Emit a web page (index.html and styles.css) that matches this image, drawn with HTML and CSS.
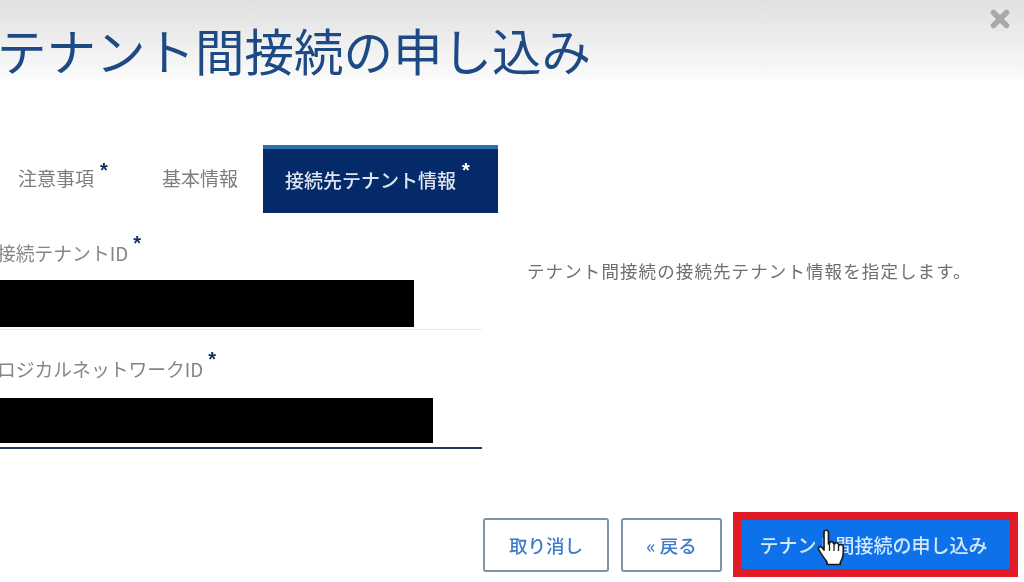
FILE: index.html
```html
<!DOCTYPE html>
<html lang="ja">
<head>
<meta charset="utf-8">
<title>テナント間接続の申し込み</title>
<link rel="stylesheet" href="styles.css">
</head>
<body>
<div class="dialog">
  <header class="head">
    <h1 class="title">テナント間接続の申し込み</h1>
    <span class="close">
      <svg width="22" height="22" viewBox="0 0 22 22"><path d="M4.500 4.500L17.500 17.500M17.500 4.500L4.500 17.500" stroke="#a9a9a9" stroke-width="5.500" stroke-linecap="round"/></svg>
    </span>
  </header>
  <nav class="tabs">
    <div class="tab tab-first">注意事項<sup class="star">*</sup></div>
    <div class="tab tab-second">基本情報</div>
    <div class="tab tab-active">接続先テナント情報<sup class="star">*</sup></div>
  </nav>
  <main class="body">
    <section class="form">
      <div class="field">
        <label class="label">接続テナントID<sup class="star">*</sup></label>
        <div class="input input-plain"><div class="mask mask-one"></div></div>
      </div>
      <div class="field field-second">
        <label class="label">ロジカルネットワークID<sup class="star">*</sup></label>
        <div class="input input-focus"><div class="mask mask-two"></div></div>
      </div>
    </section>
    <p class="desc">テナント間接続の接続先テナント情報を指定します。</p>
  </main>
  <footer class="foot">
    <button class="btn btn-cancel">取り消し</button>
    <button class="btn btn-back">« 戻る</button>
    <div class="highlight">
      <button class="btn btn-primary">テナント間接続の申し込み</button>
      <svg class="cursor" width="30" height="38" viewBox="0 0 30 38">
        <path d="M7 3.500c0-3 4.500-3 4.500 0V15l1-.5c0-2.500 4-2.500 4 0l1 .5c.5-2 4-2 4 .5l1 .8c1-1.500 3.800-.8 3.800 1.700v6c0 5-1.500 7-3 9.500v2H10v-2.500C7 29 4 25 1.800 20.500c-1-2.500 1.700-4 3.300-2L7 21Z" fill="#fff" stroke="#1b1b1b" stroke-width="1.700" stroke-linejoin="round"/>
        <path d="M12.500 15v7M17 15.500V22M21.500 16.500V22" stroke="#1b1b1b" stroke-width="1.300"/>
      </svg>
    </div>
  </footer>
</div>
</body>
</html>
```
FILE: styles.css
```css
* { box-sizing: border-box; }
html, body { margin: 0; padding: 0; }
body {
  width: 1024px;
  height: 582px;
  overflow: hidden;
  background: #fff;
  font-family: "Noto Sans CJK JP", "Noto Sans", sans-serif;
}
.dialog {
  display: flex;
  flex-direction: column;
  height: 582px;
  filter: blur(0.6px);
}
.head {
  height: 80px;
  flex: none;
  display: flex;
  justify-content: space-between;
  align-items: flex-start;
  background: linear-gradient(#e0e0e0, #fbfbfb);
  padding-right: 13px;
}
.title {
  margin: 0 0 0 -3px;
  font-size: 49.500px;
  line-height: 100px;
  height: 80px;
  font-weight: 400;
  color: #1d4a85;
  white-space: nowrap;
}
.close { margin-top: 8px; line-height: 0; }
.tabs {
  display: flex;
  height: 68px;
  margin-top: 65px;
  font-size: 19px;
  color: #7d7d7d;
}
.tab {
  display: flex;
  align-items: center;
  height: 68px;
  white-space: nowrap;
  padding-bottom: 3px;
}
.tab-first { margin-left: 18px; width: 144px; }
.tab-second { width: 101px; }
.tab-active {
  width: 235px;
  padding-left: 22px;
  background: #052a69;
  border-top: 4px solid #2b6fad;
  color: #dfe5ee;
  font-weight: 500;
}
.star {
  align-self: flex-start;
  margin: 15px 0 0 6px;
  font-size: 20px;
  line-height: 20px;
  font-weight: 700;
  color: #12305f;
  font-family: "Liberation Sans", sans-serif;
}
.tab-active .star { color: #fff; margin-top: 11px; }
.body {
  display: flex;
  flex: none;
  height: 294px;
}
.form {
  width: 482px;
  flex: none;
  padding-top: 21px;
}
.field { display: flex; flex-direction: column; }
.field-second { margin-top: 20px; }
.label {
  display: flex;
  height: 36px;
  align-items: center;
  margin-left: -3px;
  font-size: 18.800px;
  color: #868686;
  white-space: nowrap;
}
.label .star { margin: -1px 0 0 5px; }
.input { height: 50px; margin-top: 10px; border-bottom: 1px solid #ececec; }
.input-focus { height: 51px; margin-top: 12px; border-bottom: 2px solid #26395f; }
.mask { height: 47px; background: #000; }
.mask-one { width: 414px; }
.mask-two { width: 433px; height: 45px; }
.desc {
  margin: 45px 0 0 45px;
  font-size: 17.500px;
  letter-spacing: 1.100px;
  line-height: 26px;
  color: #6f6f6f;
  white-space: nowrap;
}
.foot {
  display: flex;
  align-items: center;
  justify-content: flex-end;
  gap: 12px;
  padding-right: 6px;
  margin-top: 5px;
}
.btn {
  font: inherit;
  font-size: 18.500px;
  font-weight: 500;
  height: 54px;
  padding: 0;
  background: #fff;
  color: #3e7cc9;
  border: 2px solid #7f93a6;
  border-radius: 3px;
}
.btn-cancel { width: 126px; }
.btn-back { width: 101px; margin-right: -1px; }
.highlight {
  position: relative;
  width: 285px;
  height: 65px;
  border: 8px solid #e21a26;
  display: flex;
}
.btn-primary {
  width: 100%;
  height: 100%;
  border: 0;
  border-radius: 0;
  font-size: 19px;
  padding-right: 4px;
  background: #0d72ea;
  color: #d4e6fb;
}
.cursor {
  position: absolute;
  left: 76px;
  top: 9px;
}
```
